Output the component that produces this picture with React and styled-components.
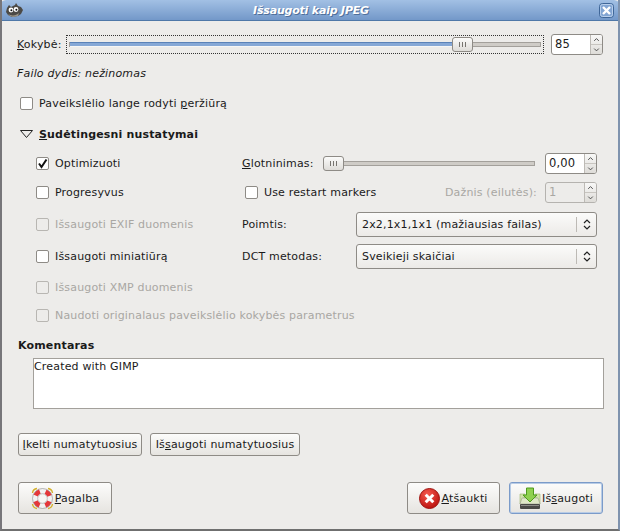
import React from 'react';
import styled, { createGlobalStyle } from 'styled-components';

const Global = createGlobalStyle`
    html, body { margin: 0; padding: 0; background: #edecea; }
    * { box-sizing: border-box; }
`
const Win = styled.div`
    width: 620px;
    height: 531px;
    display: flex;
    flex-direction: column;
    background: #edecea;
    border-left: 2px solid #77767a;
    border-right: 2px solid #7f93ae;
    border-bottom: 2px solid #6f6f6f;
    font-family: "DejaVu Sans", sans-serif;
    font-size: 11px;
    letter-spacing: 0.17px;
    color: #1a1a1a;
    overflow: hidden;
`
const TitleBar = styled.div`
    height: 21px;
    margin: 0 -2px;
    flex: none;
    display: flex;
    align-items: center;
    justify-content: space-between;
    padding: 0 6px 0 6px;
    border-radius: 6px 6px 0 0;
    border-bottom: 1px solid #4f78a8;
    background: linear-gradient(#a2c0e4, #7398c9);
`
const Title = styled.div`
    color: #fff;
    font-weight: bold;
    font-style: italic;
    font-size: 11px;
    letter-spacing: -0.2px;
    text-shadow: 1px 1px 0 #4f6f9a;
`
const Body = styled.div`
    flex: 1;
    display: flex;
    flex-direction: column;
    padding: 12px 15px 0 16px;
`
const Row = styled.div`
    display: flex;
    align-items: center;
`
const QualityRow = styled(Row)`
    height: 22px;
    gap: 7px;
    margin-left: -1px;
`
const QualityLabel = styled.div`
    width: 42px;
    flex: none;
`
const Muted = styled.div`
    font-style: italic;
    margin: 11px 0 0 -1px;
    height: 16px;
    line-height: 16px;
`
const ScaleFocus = styled.div`
    flex: 1;
    height: 19px;
    border: 1px dotted #333;
    display: flex;
    align-items: center;
    padding: 0 2px;
`
const Track = styled.div`
    flex: 1;
    height: 5px;
    position: relative;
    display: flex;
    border: 1px solid #a3a09b;
    background: #cfccc7;
`
const Fill = styled.div`
    height: 100%;
    width: ${p => p.$w}px;
    background: #86a8d6;
    box-shadow: 0 -1px 0 #5a82b8, 0 1px 0 #f6f6f5;
`
const Thumb = styled.div`
    position: absolute;
    top: -6px;
    left: ${p => p.$x}px;
    width: 21px;
    height: 15px;
    border: 1px solid #8e8b86;
    border-radius: 3px;
    background: linear-gradient(#fbfbfa, #dedcd8);
    display: flex;
    align-items: center;
    justify-content: center;
    gap: 2px;
    span { width: 1px; height: 5px; background: #77746f; }
`
const Spin = styled.div`
    width: ${p => p.$w || 52}px;
    height: 21px;
    flex: none;
    border: 1px solid ${p => p.$off ? '#b5b3af' : '#8e8b86'};
    border-radius: 3px;
    background: ${p => p.$off ? '#edecea' : '#fff'};
    color: ${p => p.$off ? '#a9a7a3' : '#1a1a1a'};
    display: flex;
    overflow: hidden;
`
const SpinValue = styled.div`
    flex: 1;
    padding-left: 3px;
    line-height: 19px;
    font-size: 11.5px;
`
const SpinArrows = styled.div`
    width: 12px;
    border-left: 1px solid #bdbab5;
    background: linear-gradient(#f8f8f7, #dedcd8);
    display: flex;
    flex-direction: column;
    svg { flex: 1; display: block; }
    svg + svg { border-top: 1px solid #c8c5c0; }
`
const CheckRow = styled(Row)`
    gap: 6px;
    color: ${p => p.$off ? '#a9a7a3' : '#1a1a1a'};
`
const Box = styled.span`
    width: 13px;
    height: 13px;
    flex: none;
    border: 1px solid ${p => p.$off ? '#b8b6b2' : '#8e8b86'};
    border-radius: 2px;
    background: ${p => p.$off ? '#edecea' : '#fff'};
    display: flex;
    align-items: center;
    justify-content: center;
`
const PreviewRow = styled(CheckRow)`
    margin: 11px 0 0 2px;
    height: 20px;
`
const Expander = styled(Row)`
    margin: 11px 0 0 2px;
    height: 20px;
    gap: 6px;
    font-weight: bold;
`
const Columns = styled.div`
    display: grid;
    grid-template-columns: 206px 355px;
    margin: 5px 0 0 18px;
`
const LeftCol = styled.div`
    display: flex;
    flex-direction: column;
`
const LeftItem = styled(CheckRow)`
    height: ${p => p.$h}px;
    white-space: nowrap;
`
const RightCol = styled.div`
    display: flex;
    flex-direction: column;
`
const RightRow = styled(Row)`
    height: ${p => p.$h}px;
`
const SliderLabel = styled.div`
    width: 81px;
    flex: none;
`
const SliderBox = styled.div`
    width: 212px;
    margin-right: 10px;
    display: flex;
`
const RestartCheck = styled(CheckRow)`
    margin-left: 3px;
`
const RateLabel = styled(CheckRow)`
    margin-right: 8px;
`
const FieldLabel = styled.div`
    width: 114px;
    flex: none;
`
const Select = styled.div`
    width: 241px;
    height: 25px;
    border: 1px solid #8e8b86;
    border-radius: 3px;
    background: linear-gradient(#fbfbfa, #eceae7);
    display: flex;
    align-items: center;
    padding-left: 5px;
`
const SelectText = styled.div`
    flex: 1;
`
const SelectArrows = styled.div`
    width: 20px;
    height: 15px;
    border-left: 1px solid #bdbab5;
    display: flex;
    align-items: center;
    justify-content: center;
`
const CommentLabel = styled.div`
    font-weight: bold;
    margin-top: 9px;
    height: 16px;
    line-height: 16px;
`
const Comment = styled.div`
    margin: 4px 0 0 15px;
    width: 571px;
    height: 51px;
    border: 1px solid #a3a09b;
    background: #fff;
    padding: 1px 0 0;
    line-height: 14px;
`
const PresetRow = styled(Row)`
    margin-top: 24px;
    gap: 8px;
`
const Button = styled.button`
    height: ${p => p.$h || 23}px;
    width: ${p => p.$w}px;
    border: 1px solid ${p => p.$focus ? '#7b9bc9' : '#8e8b86'};
    border-radius: 3px;
    background: linear-gradient(#fcfcfb, #e6e4e0);
    font: inherit;
    letter-spacing: inherit;
    color: #1a1a1a;
    padding: 0;
    display: flex;
    align-items: center;
    justify-content: center;
    gap: 1px;
    flex: none;
    box-shadow: ${p => p.$focus ? 'inset 0 0 0 1px #b8cce6' : 'none'};
`
const ActionRow = styled(Row)`
    margin-top: 26px;
    gap: 9px;
`
const Spacer = styled.div`
    flex: 1;
`
const Key = styled.span`
    text-decoration: underline;
`

const Up = () => <svg viewBox="0 0 12 9"><path d="M3.5 6 6 3.5 8.5 6" fill="none" stroke="#444" /></svg>;
const Down = () => <svg viewBox="0 0 12 9"><path d="M3.5 3.5 6 6 8.5 3.5" fill="none" stroke="#444" /></svg>;

const SelectIcon = () => (
    <svg width="8" height="13" viewBox="0 0 8 13">
        <path d="M1 5 4 2 7 5M1 8l3 3 3-3" fill="none" stroke="#222" strokeWidth="1.2" />
    </svg>
);

const SpinBox = ({ value, off }) => (
    <Spin $off={off}>
        <SpinValue>{value}</SpinValue>
        <SpinArrows><Up /><Down /></SpinArrows>
    </Spin>
);

const Check = ({ checked, off }) => (
    <Box $off={off}>
        {checked && (
            <svg width="11" height="11" viewBox="0 0 11 11">
                <path d="M2 5.5 4.5 9 9.5 1.5" fill="none" stroke="#111" strokeWidth="2" />
            </svg>
        )}
    </Box>
);

const Wilber = () => (
    <svg width="17" height="15" viewBox="0 0 17 15">
        <path d="M1 5 3 2 5 4 9 2l1-2 2 3 3 1 2 3-2 4-3 2-6 1-4-2L0 9z" fill="#4c4a46" />
        <path d="M2 11c3 2 8 2 11-1l-1 3-5 1-3-1z" fill="#9a9486" />
        <circle cx="5" cy="7" r="2.4" fill="#fff" />
        <circle cx="10" cy="6.5" r="2.4" fill="#fff" />
        <circle cx="5.4" cy="7.2" r="1" fill="#111" />
        <circle cx="10.4" cy="6.7" r="1" fill="#111" />
    </svg>
);

const CloseIcon = () => (
    <svg width="15" height="15" viewBox="0 0 15 15">
        <rect x="0.5" y="0.5" width="14" height="14" rx="3" fill="#82a5d3" stroke="#3f6698" />
        <rect x="1.5" y="1.5" width="12" height="12" rx="2" fill="none" stroke="#b9cfeb" />
        <path d="M4 4l7 7M11 4l-7 7" stroke="#fff" strokeWidth="2.4" />
    </svg>
);

const HelpIcon = () => (
    <svg width="23" height="23" viewBox="0 0 23 23">
        <g fill="none" stroke="#d4b02c" strokeWidth="1.4">
            <path d="M6 1.5 Q2 2 1.5 6M17 1.5 Q21 2 21.5 6M6 21.5 Q2 21 1.5 17M17 21.5 Q21 21 21.5 17" />
        </g>
        <circle cx="11.5" cy="11.5" r="7.5" fill="none" stroke="#f2f2f2" strokeWidth="5" />
        <circle cx="11.5" cy="11.5" r="7.5" fill="none" stroke="#e5373a" strokeWidth="5" strokeDasharray="5.89 5.89" strokeDashoffset="-2.95" />
        <circle cx="11.5" cy="11.5" r="10" fill="none" stroke="#8a8a8a" strokeWidth="0.6" />
        <circle cx="11.5" cy="11.5" r="4.8" fill="#f7f6f4" stroke="#999" strokeWidth="0.6" />
    </svg>
);

const CancelIcon = () => (
    <svg width="21" height="21" viewBox="0 0 21 21">
        <defs>
            <radialGradient id="red" cx="40%" cy="30%" r="75%">
                <stop offset="0" stopColor="#f6594f" />
                <stop offset="1" stopColor="#b80f0b" />
            </radialGradient>
        </defs>
        <circle cx="10.5" cy="10.5" r="10" fill="url(#red)" stroke="#9e1410" />
        <path d="M6.7 6.7l7.6 7.6M14.3 6.7l-7.6 7.6" stroke="#fff" strokeWidth="3" />
    </svg>
);

const SaveIcon = () => (
    <svg width="22" height="23" viewBox="0 0 22 23">
        <path d="M1 7h5v4H4l-1 6H1z M21 7h-5v4h2l1 6h2z" fill="#cfe3a8" stroke="#9ab56c" strokeWidth="0.6" />
        <path d="M3 11h16l2 6H1z" fill="#dfe8c8" stroke="#9a9a90" strokeWidth="0.6" />
        <path d="M7.5 1h7v7h3.5L11 15 4 8h3.5z" fill="#8fd14f" stroke="#4f9a1f" />
        <rect x="1" y="17" width="20" height="5" rx="1" fill="#4a4a48" />
        <rect x="2" y="18" width="18" height="1" fill="#8a8a86" />
    </svg>
);

export default function App() {
    return (
        <>
            <Global />
            <Win>
                <TitleBar>
                    <Wilber />
                    <Title>Išsaugoti kaip JPEG</Title>
                    <CloseIcon />
                </TitleBar>
                <Body>
                    <QualityRow>
                        <QualityLabel><Key>K</Key>okybė:</QualityLabel>
                        <ScaleFocus>
                            <Track>
                                <Fill $w={383} />
                                <Thumb $x={382}><span /><span /><span /></Thumb>
                            </Track>
                        </ScaleFocus>
                        <SpinBox value="85" />
                    </QualityRow>
                    <Muted>Failo dydis: nežinomas</Muted>
                    <PreviewRow>
                        <Check />
                        <span>Paveikslėlio lange rodyti <Key>p</Key>eržiūrą</span>
                    </PreviewRow>
                    <Expander>
                        <svg width="13" height="8" viewBox="0 0 13 8">
                            <path d="M.5.5h12L6.5 7.5z" fill="none" stroke="#222" />
                        </svg>
                        <span><Key>S</Key>udėtingesni nustatymai</span>
                    </Expander>
                    <Columns>
                        <LeftCol>
                            <LeftItem $h={28}><Check checked /><span>Optimizuoti</span></LeftItem>
                            <LeftItem $h={31}><Check /><span>Progresyvus</span></LeftItem>
                            <LeftItem $h={32} $off><Check off /><span>Išsaugoti EXIF duomenis</span></LeftItem>
                            <LeftItem $h={32}><Check /><span>Išsaugoti miniatiūrą</span></LeftItem>
                            <LeftItem $h={30} $off><Check off /><span>Išsaugoti XMP duomenis</span></LeftItem>
                            <LeftItem $h={27} $off><Check off /><span>Naudoti originalaus paveikslėlio kokybės parametrus</span></LeftItem>
                        </LeftCol>
                        <RightCol>
                            <RightRow $h={28}>
                                <SliderLabel><Key>G</Key>lotninimas:</SliderLabel>
                                <SliderBox>
                                    <Track>
                                        <Thumb $x={-1}><span /><span /><span /></Thumb>
                                    </Track>
                                </SliderBox>
                                <SpinBox value="0,00" />
                            </RightRow>
                            <RightRow $h={31}>
                                <RestartCheck><Check /><span>Use restart markers</span></RestartCheck>
                                <Spacer />
                                <RateLabel $off><span>Dažnis (eilutės):</span></RateLabel>
                                <SpinBox value="1" off />
                            </RightRow>
                            <RightRow $h={32}>
                                <FieldLabel>Poimtis:</FieldLabel>
                                <Select>
                                    <SelectText>2x2,1x1,1x1 (mažiausias failas)</SelectText>
                                    <SelectArrows><SelectIcon /></SelectArrows>
                                </Select>
                            </RightRow>
                            <RightRow $h={33}>
                                <FieldLabel>DCT metodas:</FieldLabel>
                                <Select>
                                    <SelectText>Sveikieji skaičiai</SelectText>
                                    <SelectArrows><SelectIcon /></SelectArrows>
                                </Select>
                            </RightRow>
                        </RightCol>
                    </Columns>
                    <CommentLabel>Komentaras</CommentLabel>
                    <Comment>Created with GIMP</Comment>
                    <PresetRow>
                        <Button $w={124}><span><Key>Į</Key>kelti numatytuosius</span></Button>
                        <Button $w={150}><span>Iš<Key>s</Key>augoti numatytuosius</span></Button>
                    </PresetRow>
                    <ActionRow>
                        <Button $w={94} $h={32}><HelpIcon /><span><Key>P</Key>agalba</span></Button>
                        <Spacer />
                        <Button $w={93} $h={32}><CancelIcon /><span><Key>A</Key>tšaukti</span></Button>
                        <Button $w={94} $h={32} $focus><SaveIcon /><span>Iš<Key>s</Key>augoti</span></Button>
                    </ActionRow>
                </Body>
            </Win>
        </>
    );
}
